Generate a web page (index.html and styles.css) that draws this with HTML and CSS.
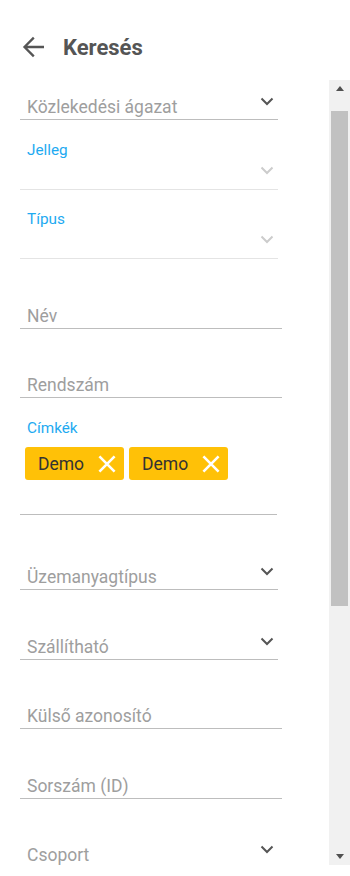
FILE: index.html
```html
<!DOCTYPE html>
<html lang="hu">
<head>
    <meta charset="UTF-8">
    <meta name="viewport" content="width=device-width, initial-scale=1.0">
    <title>Keresés</title>
    <link rel="stylesheet" href="styles.css">
</head>
<body>
    <div class="header">
        <svg class="back" width="24" height="24" viewBox="0 0 24 24">
            <path d="M2.5 12H22M11.8 2.6L2.5 12l9.3 9.4" fill="none" stroke="#555" stroke-width="2.3"/>
        </svg>
        <h1>Keresés</h1>
    </div>

    <div class="main">
        <!-- Kereső űrlap -->
        <div class="search-form">
            <div class="field select first">
                <div class="control">
                    <span class="value">Közlekedési ágazat</span>
                    <svg class="chevron" width="24" height="24" viewBox="0 0 24 24"><path d="M6.5 9.5l5.5 5.5 5.5-5.5" fill="none" stroke="#555" stroke-width="2"/></svg>
                </div>
            </div>

            <div class="field select labeled disabled">
                <div class="label">Jelleg</div>
                <div class="control">
                    <span class="value"></span>
                    <svg class="chevron" width="24" height="24" viewBox="0 0 24 24"><path d="M6.5 9.5l5.5 5.5 5.5-5.5" fill="none" stroke="#ccc" stroke-width="2"/></svg>
                </div>
            </div>

            <div class="field select labeled disabled">
                <div class="label">Típus</div>
                <div class="control">
                    <span class="value"></span>
                    <svg class="chevron" width="24" height="24" viewBox="0 0 24 24"><path d="M6.5 9.5l5.5 5.5 5.5-5.5" fill="none" stroke="#ccc" stroke-width="2"/></svg>
                </div>
            </div>

            <div class="field">
                <div class="control"><span class="value">Név</span></div>
            </div>

            <div class="field">
                <div class="control"><span class="value">Rendszám</span></div>
            </div>

            <div class="field labeled tags">
                <div class="label">Címkék</div>
                <div class="chips">
                    <span class="chip">Demo
                        <svg width="24" height="24" viewBox="0 0 24 24"><path d="M4.4 4.4l15.2 15.2M19.6 4.4L4.4 19.6" stroke="#fff" stroke-width="2.6"/></svg>
                    </span>
                    <span class="chip">Demo
                        <svg width="24" height="24" viewBox="0 0 24 24"><path d="M4.4 4.4l15.2 15.2M19.6 4.4L4.4 19.6" stroke="#fff" stroke-width="2.6"/></svg>
                    </span>
                </div>
                <div class="chip-input"></div>
            </div>

            <div class="field select">
                <div class="control">
                    <span class="value">Üzemanyagtípus</span>
                    <svg class="chevron" width="24" height="24" viewBox="0 0 24 24"><path d="M6.5 9.5l5.5 5.5 5.5-5.5" fill="none" stroke="#555" stroke-width="2"/></svg>
                </div>
            </div>

            <div class="field select">
                <div class="control">
                    <span class="value">Szállítható</span>
                    <svg class="chevron" width="24" height="24" viewBox="0 0 24 24"><path d="M6.5 9.5l5.5 5.5 5.5-5.5" fill="none" stroke="#555" stroke-width="2"/></svg>
                </div>
            </div>

            <div class="field">
                <div class="control"><span class="value">Külső azonosító</span></div>
            </div>

            <div class="field">
                <div class="control"><span class="value">Sorszám (ID)</span></div>
            </div>

            <div class="field select">
                <div class="control">
                    <span class="value">Csoport</span>
                    <svg class="chevron" width="24" height="24" viewBox="0 0 24 24"><path d="M6.5 9.5l5.5 5.5 5.5-5.5" fill="none" stroke="#555" stroke-width="2"/></svg>
                </div>
            </div>
        </div>

        <!-- Görgetősáv -->
        <div class="scrollbar">
            <div class="sb-btn"><span class="arrow-up"></span></div>
            <div class="sb-thumb"></div>
            <div class="sb-btn"><span class="arrow-down"></span></div>
        </div>
    </div>
</body>
</html>
```

FILE: styles.css
```css
body {
    margin: 0;
    font-family: Roboto, 'Noto Sans', sans-serif;
    background: #fff;
    width: 350px;
    height: 876px;
    overflow: hidden;
}
.header {
    display: flex;
    align-items: center;
    height: 34px;
    padding-top: 30px;
    margin-bottom: 16px;
}
.back {
    margin-left: 22px;
    flex: none;
}
h1 {
    margin: 0 0 0 17px;
    font-size: 22px;
    font-weight: bold;
    color: #555;
}
.main {
    display: flex;
    height: 785px;
}
.search-form {
    width: 262px;
    margin-left: 20px;
    overflow: hidden;
}
.field {
    width: 262px;
    padding-top: 25px;
    margin-bottom: 19.5px;
}
.field.first {
    padding-top: 15px;
}
.field.labeled {
    padding-top: 0;
}
.field.select {
    width: 258px;
}
.label {
    height: 20px;
    line-height: 20px;
    margin-bottom: 5px;
    padding-left: 7px;
    font-size: 15.3px;
    color: #1eaaf1;
}
.control {
    display: flex;
    height: 24px;
    line-height: 24px;
    padding-left: 7px;
    border-bottom: 1px solid #bdbdbd;
    font-size: 17.5px;
    color: #9e9e9e;
}
.value {
    flex: 1;
    white-space: nowrap;
}
.chevron {
    flex: none;
    margin-top: -6px;
    margin-right: -1px;
}
.disabled .control {
    border-bottom-color: #e4e4e4;
}
.disabled .chevron {
    margin-top: -7px;
}
.tags {
    width: 257px;
    margin-bottom: 25px;
}
.tags .label {
    margin-bottom: 9.5px;
}
.chips {
    display: flex;
    gap: 5px;
    padding-left: 5px;
}
.chip {
    display: inline-flex;
    align-items: center;
    gap: 11px;
    height: 33px;
    padding: 0 5px 0 13px;
    background: #ffc107;
    border-radius: 3px;
    font-size: 17.5px;
    color: #333;
}
.chip-input {
    height: 34px;
    border-bottom: 1px solid #bdbdbd;
}
.scrollbar {
    display: flex;
    flex-direction: column;
    width: 21px;
    margin-left: auto;
    background: #f1f1f1;
}
.sb-btn {
    display: flex;
    align-items: center;
    justify-content: center;
    height: 17px;
    flex: none;
}
.sb-thumb {
    height: 495px;
    margin: 14px 2px 0;
    background: #c1c1c1;
    flex: none;
}
.sb-btn:last-child {
    margin-top: auto;
}
.arrow-up {
    border-left: 4.5px solid transparent;
    border-right: 4.5px solid transparent;
    border-bottom: 5px solid #505050;
}
.arrow-down {
    border-left: 4.5px solid transparent;
    border-right: 4.5px solid transparent;
    border-top: 5px solid #505050;
}
```
